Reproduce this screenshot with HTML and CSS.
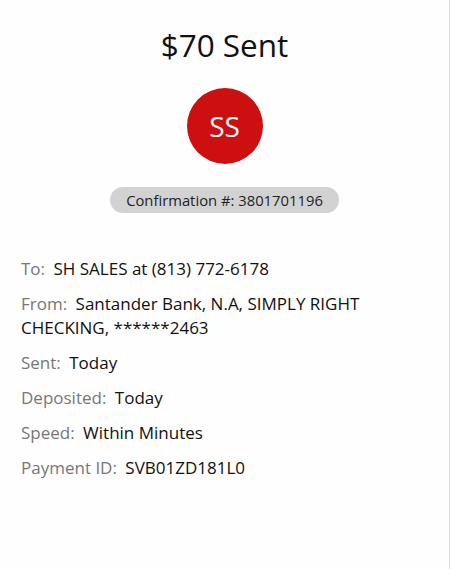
FILE: index.html
```html
<!DOCTYPE html>
<html lang="en">
<head>
  <meta charset="UTF-8">
  <meta name="viewport" content="width=device-width, initial-scale=1.0">
  <title>Payment Sent</title>
  <link rel="stylesheet" href="styles.css">
</head>
<body>
  <div class="screen">
    <h1 class="amount">$70 Sent</h1>
    <div class="avatar">SS</div>
    <div class="confirm">Confirmation #: 3801701196</div>

    <div class="details">
      <p class="row"><span class="label">To:</span> SH SALES at (813) 772-6178</p>
      <p class="row"><span class="label">From:</span> Santander Bank, N.A, SIMPLY RIGHT CHECKING, ******2463</p>
      <p class="row"><span class="label">Sent:</span> Today</p>
      <p class="row"><span class="label">Deposited:</span> Today</p>
      <p class="row"><span class="label">Speed:</span> Within Minutes</p>
      <p class="row"><span class="label">Payment ID:</span> SVB01ZD181L0</p>
    </div>
  </div>
</body>
</html>
```

FILE: styles.css
```css
/* General */
body {
  margin: 0;
  background: #fff;
  font-family: 'Open Sans', 'Noto Sans', sans-serif;
  color: #1a1a1a;
}

.screen {
  width: 449px;
  height: 569px;
  border-right: 1px solid #dcdcdc;
  background: #fefefe;
  display: flex;
  flex-direction: column;
  align-items: center;
}

/* Header */
.amount {
  font-size: 31.5px;
  font-weight: 400;
  margin: 25px 0 0;
  line-height: 40px;
  color: #111;
}

.avatar {
  width: 76px;
  height: 76px;
  border-radius: 50%;
  background: #cc0f0f;
  color: #fff;
  font-size: 28px;
  display: flex;
  justify-content: center;
  align-items: center;
  margin-top: 23px;
}

.confirm {
  margin-top: 23px;
  background: #d2d2d2;
  border-radius: 13px;
  padding: 0 16px;
  height: 26px;
  line-height: 26px;
  font-size: 14.8px;
  color: #222;
}

/* Details */
.details {
  align-self: stretch;
  padding: 0 21px;
  margin-top: 44px;
}

.row {
  margin: 0 0 11px;
  font-size: 17px;
  line-height: 24px;
  color: #111;
}

.label {
  color: #777;
  margin-right: 4px;
}
```
